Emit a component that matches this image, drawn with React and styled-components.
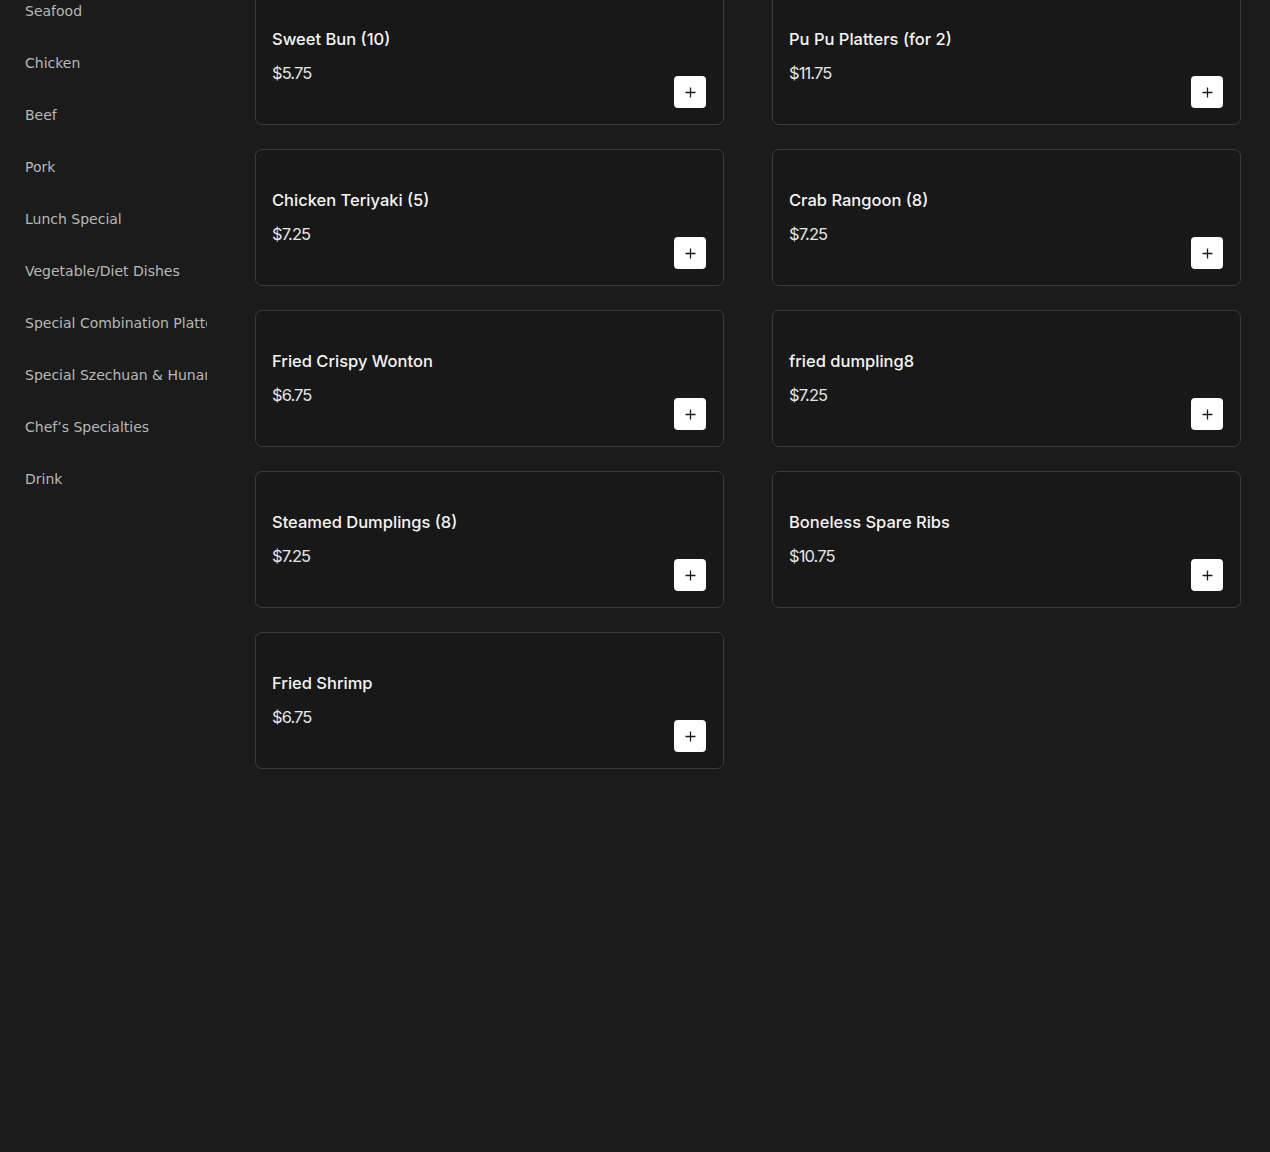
import React from 'react';
import styled, { createGlobalStyle } from 'styled-components';

const categories = [
	'Seafood',
	'Chicken',
	'Beef',
	'Pork',
	'Lunch Special',
	'Vegetable/Diet Dishes',
	'Special Combination Platters',
	'Special Szechuan & Hunan Dishes',
	'Chef’s Specialties',
	'Drink',
];

const items = [
	{ name: 'Sweet Bun (10)', price: 5.75 },
	{ name: 'Pu Pu Platters (for 2)', price: 11.75 },
	{ name: 'Chicken Teriyaki (5)', price: 7.25 },
	{ name: 'Crab Rangoon (8)', price: 7.25 },
	{ name: 'Fried Crispy Wonton', price: 6.75 },
	{ name: 'fried dumpling8', price: 7.25 },
	{ name: 'Steamed Dumplings (8)', price: 7.25 },
	{ name: 'Boneless Spare Ribs', price: 10.75 },
	{ name: 'Fried Shrimp', price: 6.75 },
];

const PlusIcon = () => (
	<svg width="11" height="11" viewBox="0 0 11 11" fill="none">
		<path d="M5.5 0.5v10M0.5 5.5h10" stroke="#1a1a1a" strokeWidth="1.3" />
	</svg>
);

function App() {
	return (
		<>
			<GlobalStyle />
			<Page>
				<Sidebar>
					{categories.map((c) => (
						<CategoryItem key={c}>{c}</CategoryItem>
					))}
				</Sidebar>
				<Main>
					<Grid>
						{items.map((item) => (
							<Card key={item.name}>
								<Info>
									<Title>{item.name}</Title>
									<Price>${item.price.toFixed(2)}</Price>
								</Info>
								<AddBtn type="button">
									<PlusIcon />
								</AddBtn>
							</Card>
						))}
					</Grid>
				</Main>
			</Page>
		</>
	);
}

const GlobalStyle = createGlobalStyle`
	html, body {
		margin: 0;
		padding: 0;
		background: #1b1b1b;
		height: 100%;
		overflow: hidden;
	}
	* { box-sizing: border-box; }
`;

// page is shown scrolled down a little
const Page = styled.div`
	display: flex;
	align-items: flex-start;
	margin-top: -15px;
	min-height: 1200px;
	background: #1b1b1b;
`;

const Sidebar = styled.nav`
	display: flex;
	flex-direction: column;
	width: 207px;
	flex: 0 0 207px;
	overflow: hidden;
`;

const CategoryItem = styled.div`
	padding: 16px 0 16px 25px;
	height: 52px;
	line-height: 20px;
	font-family: 'DejaVu Sans', sans-serif;
	font-size: 14px;
	color: #b8b8b8;
	white-space: nowrap;
	overflow: hidden;
`;

const Main = styled.main`
	flex: 1;
	padding: 3px 29px 0 48px;
`;

const Grid = styled.div`
	display: grid;
	grid-template-columns: 1fr 1fr;
	column-gap: 48px;
	row-gap: 24px;
`;

const Card = styled.div`
	display: flex;
	justify-content: space-between;
	height: 137px;
	padding: 16px 17px 16px 16px;
	background: #181818;
	border: 1px solid #3b3b3b;
	border-radius: 7px;
`;

const Info = styled.div`
	display: flex;
	flex-direction: column;
	align-self: flex-start;
	padding-top: 22px;
	font-family: Inter, 'Noto Sans', sans-serif;
`;

const Title = styled.div`
	font-size: 16.5px;
	font-weight: 500;
	line-height: 24px;
	color: #f4f4f4;
`;

const Price = styled.div`
	margin-top: 10px;
	font-size: 16.5px;
	font-weight: 400;
	line-height: 24px;
	color: #e6e6e6;
	letter-spacing: -0.9px;
`;

const AddBtn = styled.button`
	display: flex;
	align-items: center;
	justify-content: center;
	align-self: flex-end;
	width: 32px;
	height: 32px;
	padding: 0;
	background: #ffffff;
	border: none;
	border-radius: 4px;
	cursor: pointer;
`;

export default App;
